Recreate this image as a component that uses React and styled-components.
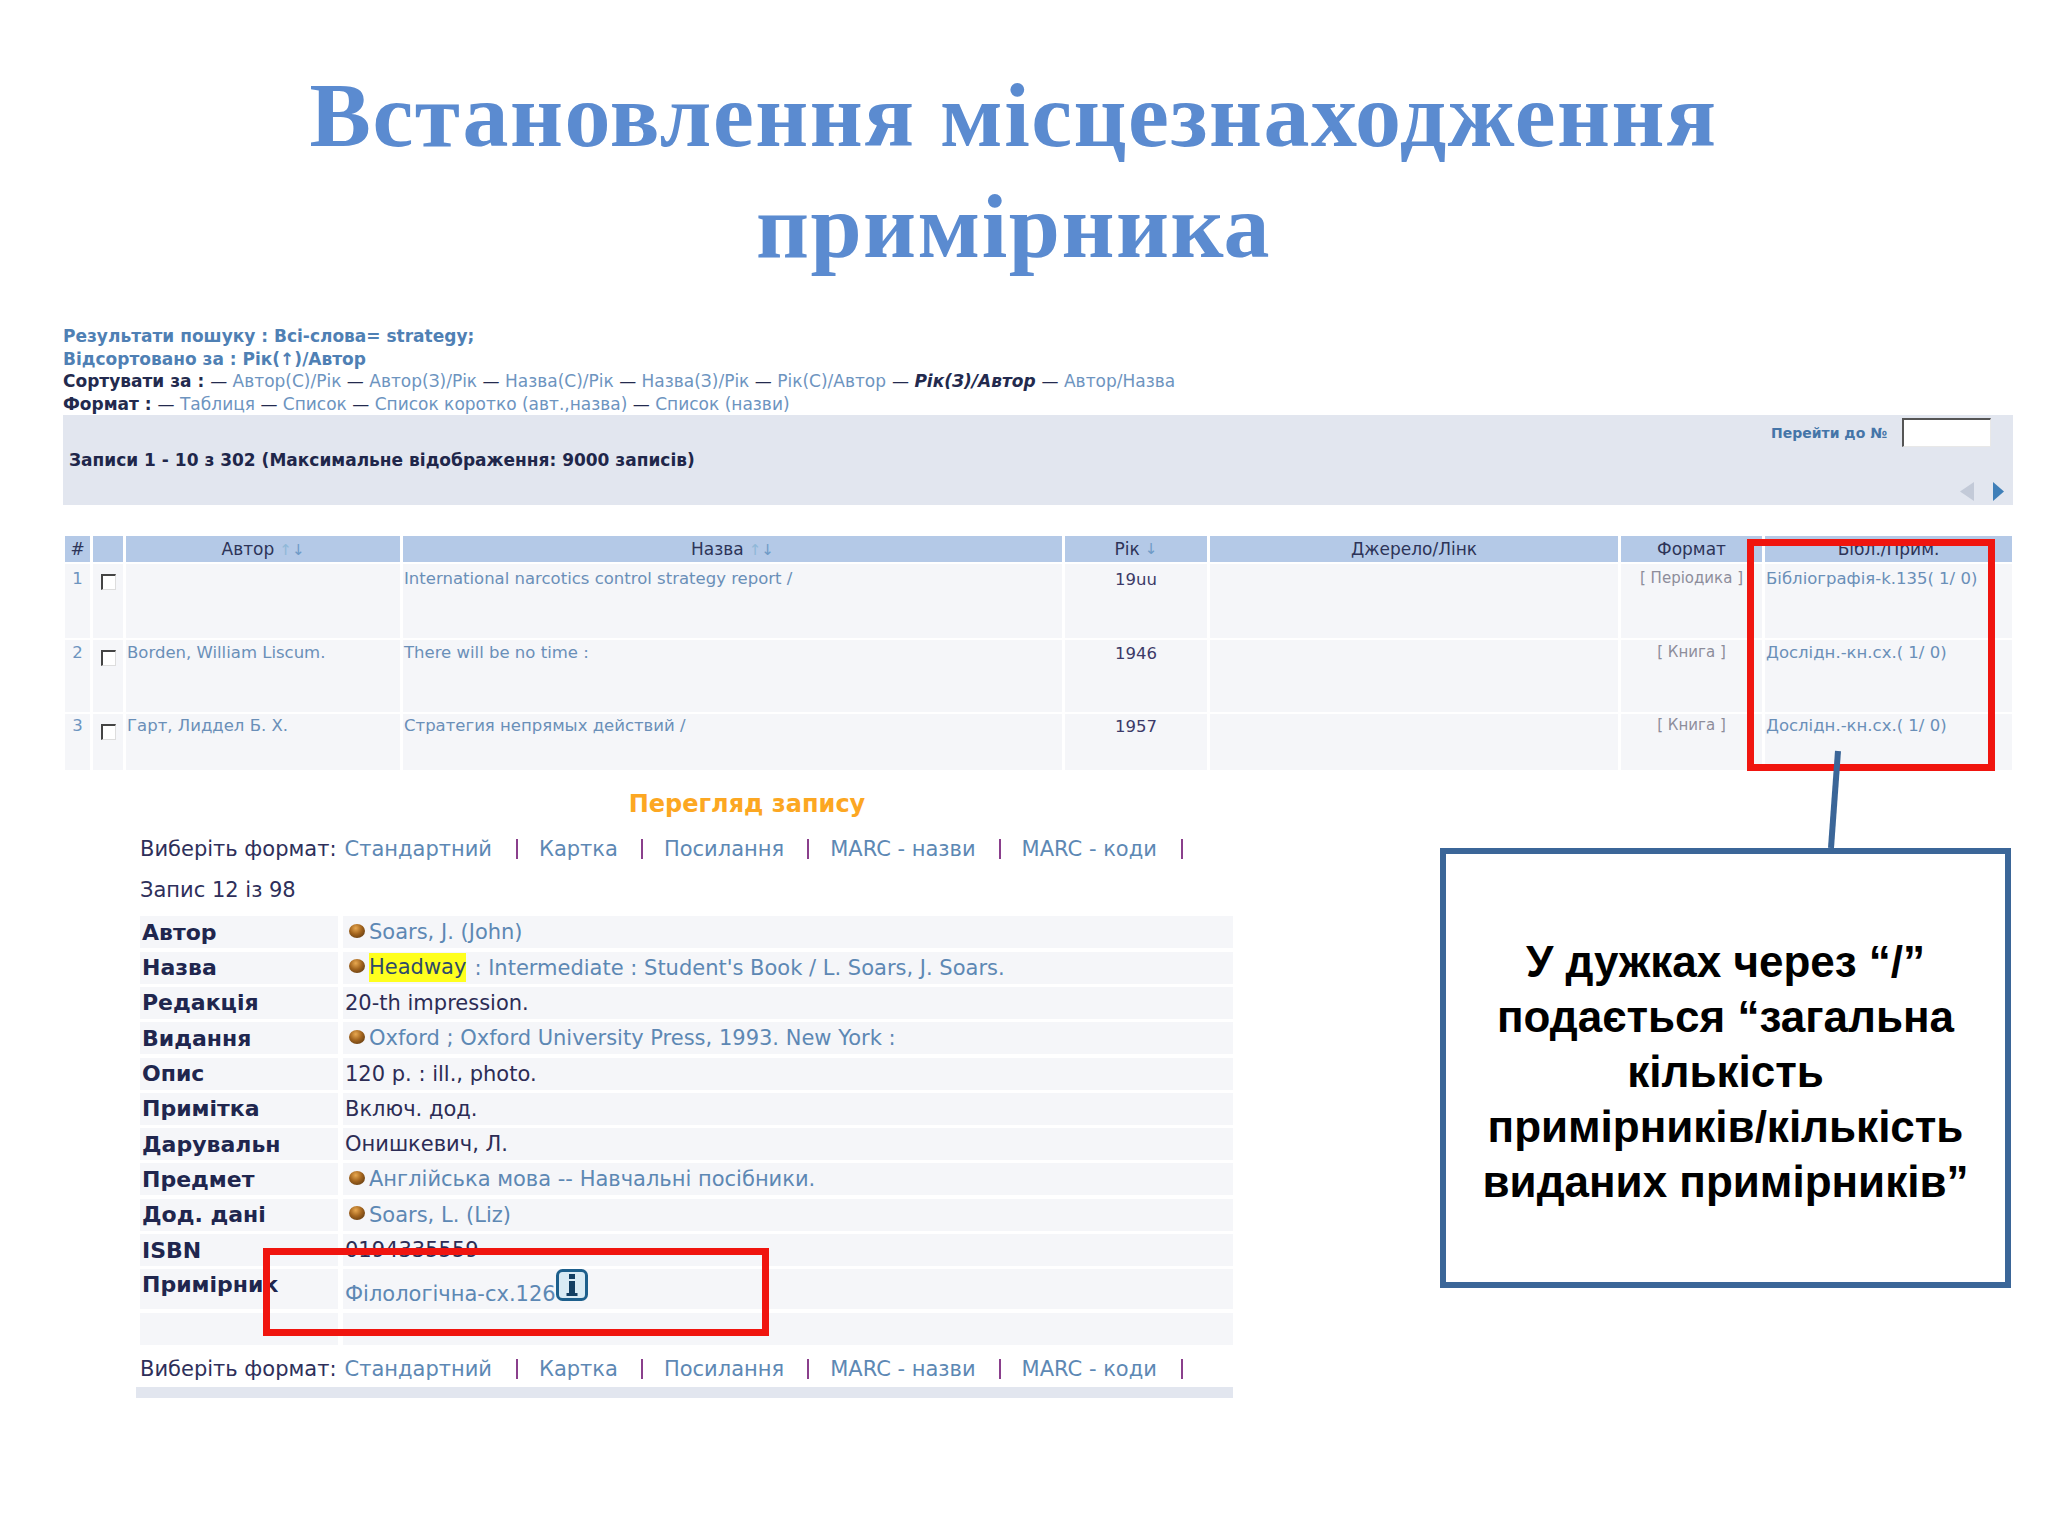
import React from "react";
import styled, { createGlobalStyle } from "styled-components";

const Global = createGlobalStyle`
  html, body { margin: 0; padding: 0; background: #fff; }
  * { box-sizing: border-box; }
`;

const Slide = styled.div`
  position: relative;
  width: 2048px;
  height: 1536px;
  overflow: hidden;
  background: #fff;
  padding: 60px 35px 0 63px;
  font-family: "DejaVu Sans", Verdana, sans-serif;
`;

const Title = styled.h1`
  margin: 0 0 0 -63px;
  width: 2048px;
  padding-right: 21px;
  text-align: center;
  font-family: "Liberation Serif", "Times New Roman", serif;
  font-weight: 700;
  font-size: 92px;
  line-height: 111px;
  letter-spacing: 1.5px;
  color: #5b8bd0;
`;

const Summary = styled.div`
  margin-top: 43px;
  font-size: 17px;
`;

const SummaryLine = styled.div`
  height: 22.6px;
  line-height: 22.6px;
  white-space: nowrap;
  font-weight: 700;
  color: ${(p) => (p.$accent ? "#4f80b4" : "#232a4e")};
`;

const SortLink = styled.span`
  font-weight: 400;
  color: #6d94bf;
`;

const ActiveSort = styled.span`
  font-style: italic;
  color: #232a4e;
`;

const Pager = styled.div`
  display: flex;
  justify-content: space-between;
  width: 1950px;
  height: 90px;
  background: #e2e6ef;
`;

const PagerCount = styled.div`
  align-self: center;
  margin-left: 6px;
  font-size: 17px;
  font-weight: 700;
  color: #20264a;
`;

const PagerTools = styled.div`
  display: flex;
  flex-direction: column;
  align-items: flex-end;
  justify-content: space-between;
  padding: 3px 9px 4px 0;
`;

const JumpRow = styled.div`
  display: flex;
  align-items: center;
  gap: 15px;
  margin-right: 13px;
  font-size: 14px;
  font-weight: 700;
  color: #4575a8;
`;

const JumpInput = styled.div`
  width: 89px;
  height: 29px;
  background: #fff;
  border: 1px solid #e8e8e8;
  border-top: 2px solid #555;
  border-left: 2px solid #555;
`;

const ArrowRow = styled.div`
  display: flex;
  gap: 19px;
`;

const Results = styled.div`
  display: flex;
  flex-direction: column;
  gap: 2px;
  width: 1947px;
  margin: 31px 0 0 2px;
`;

const ResultRow = styled.div`
  display: grid;
  grid-template-columns: 25px 30px 274px 659px 142px 408px 141px 247px;
  column-gap: 3px;
  height: ${(p) => p.$h}px;
`;

const HeadCell = styled.div`
  background: #b4c9e7;
  display: flex;
  align-items: center;
  justify-content: center;
  gap: 5px;
  font-size: 17px;
  color: #2d3458;
`;

const SortArrow = styled.span`
  font-size: 15px;
  color: ${(p) => (p.$dark ? "#6e9ac6" : "#8fb8d8")};
`;

const Cell = styled.div`
  background: #f5f6f9;
  padding-top: ${(p) => p.$top}px;
  font-size: 16.5px;
  line-height: 20px;
  white-space: nowrap;
`;

const NumCell = styled(Cell)`
  text-align: center;
  color: #6d94bf;
`;

const LinkCell = styled(Cell)`
  padding-left: 1px;
  padding-right: 0;
  color: #6a8fb8;
`;

const YearCell = styled(Cell)`
  padding-top: ${(p) => p.$top + 1}px;
  text-align: center;
  color: #3c3a68;
`;

const FormatCell = styled(Cell)`
  padding-top: ${(p) => p.$top - 1}px;
  text-align: center;
  font-size: 15px;
  color: #8d8d9b;
`;

const CheckCell = styled(Cell)`
  padding: 10px 0 0 8px;
`;

const Check = styled.div`
  width: 15px;
  height: 16px;
  background: #fff;
  border-top: 2px solid #444;
  border-left: 2px solid #444;
  border-right: 1px solid #ddd;
  border-bottom: 1px solid #ddd;
`;

const Lower = styled.div`
  display: flex;
  align-items: flex-start;
`;

const RecordColumn = styled.div`
  width: 1170px;
  padding-left: 77px;
  font-size: 21px;
`;

const RecordTitle = styled.div`
  margin: 19px 0 0 -77px;
  width: 1368px;
  text-align: center;
  font-size: 24px;
  line-height: 30px;
  font-weight: 700;
  color: #fca722;
`;

const FormatRow = styled.div`
  display: flex;
  align-items: center;
  height: 30px;
  margin-top: ${(p) => p.$mt}px;
  white-space: nowrap;
  color: #2e2f5a;
`;

const FormatLink = styled.span`
  color: #5d88b4;
  margin-left: ${(p) => p.$ml}px;
`;

const Sep = styled.span`
  display: inline-block;
  width: 2px;
  height: 20px;
  margin-left: ${(p) => p.$ml}px;
  background: #8a3f8c;
`;

const RecordCount = styled.div`
  height: 30px;
  line-height: 30px;
  margin-top: 11px;
  color: #2e2f5a;
`;

const Details = styled.div`
  display: flex;
  flex-direction: column;
  width: 1093px;
  margin-top: 11px;
`;

const DetailRow = styled.div`
  display: grid;
  grid-template-columns: 198px 890px;
  column-gap: 5px;
  height: ${(p) => p.$h}px;
  margin-bottom: ${(p) => p.$gap}px;
`;

const DetailLabel = styled.div`
  display: flex;
  align-items: ${(p) => (p.$top ? "flex-start" : "center")};
  padding: ${(p) => (p.$top ? "3px 0 0 2px" : "0 0 0 2px")};
  background: #f5f6f9;
  font-weight: 700;
  font-size: 22px;
  color: #20264e;
  white-space: nowrap;
`;

const DetailValue = styled.div`
  display: flex;
  align-items: ${(p) => (p.$end ? "flex-start" : "center")};
  padding: ${(p) => (p.$end ? "1px 0 0 2px" : "0 0 0 2px")};
  background: #f5f6f9;
  white-space: nowrap;
  color: ${(p) => (p.$link ? "#5d88b4" : "#2c2c55")};
`;

const Bullet = styled.span`
  flex: none;
  width: 16px;
  height: 14px;
  margin: -3px 4px 0 4px;
  border-radius: 50%;
  background: radial-gradient(circle at 42% 30%, #e8a850 0%, #a2641e 45%, #4a2c0c 100%);
`;

const Mark = styled.span`
  display: inline-block;
  height: 29px;
  line-height: 29px;
  margin-right: 8px;
  background: #ffff1e;
  color: #2e4a6a;
`;

const ShelfLink = styled.span`
  margin-top: 9px;
  line-height: 30px;
`;

const BottomBar = styled.div`
  width: 1097px;
  height: 11px;
  margin: 3px 0 0 -4px;
  background: #e2e6ef;
`;

const Callout = styled.div`
  display: flex;
  align-items: center;
  justify-content: center;
  flex: none;
  width: 571px;
  height: 440px;
  margin: 78px 0 0 207px;
  padding-bottom: 0;
  border: 6px solid #3b6698;
  background: #fff;
  text-align: center;
  font-family: "Liberation Sans", Arial, sans-serif;
  font-weight: 700;
  font-size: 44px;
  line-height: 54.8px;
  color: #000;
`;

const CalloutText = styled.div`
  margin-top: 8px;
`;

const RedFrame = styled.div`
  position: absolute;
  left: ${(p) => p.$x}px;
  top: ${(p) => p.$y}px;
  width: ${(p) => p.$w}px;
  height: ${(p) => p.$h}px;
  border: 7px solid #f0150f;
`;

const Connector = styled.svg`
  position: absolute;
  left: 1820px;
  top: 745px;
`;

const InfoIcon = () => (
  <svg width="32" height="32" viewBox="0 0 32 32" style={{ flex: "none", marginTop: -1 }}>
    <rect x="1.5" y="1.5" width="29" height="29" rx="5" fill="#d9ebf5" stroke="#1d5f8c" strokeWidth="3" />
    <rect x="13" y="5" width="6" height="5" fill="#123f63" />
    <rect x="13" y="12" width="6" height="14" fill="#123f63" />
    <rect x="10.5" y="24" width="11" height="3" fill="#123f63" />
  </svg>
);

const TriLeft = () => (
  <svg width="14" height="19" viewBox="0 0 14 19"><path d="M14 0 L0 9.5 L14 19 Z" fill="#c3cad8" /></svg>
);
const TriRight = () => (
  <svg width="11" height="19" viewBox="0 0 11 19"><path d="M0 0 L11 9.5 L0 19 Z" fill="#3f7fb8" /></svg>
);

const sorts = ["Автор(С)/Рік", "Автор(З)/Рік", "Назва(С)/Рік", "Назва(З)/Рік", "Рік(С)/Автор"];

const results = [
  { h: 74, top: 5, n: 1, author: "", title: "International narcotics control strategy report /", year: "19uu", fmt: "[ Періодика ]", lib: "Бібліографія-k.135( 1/ 0)" },
  { h: 72, top: 3, n: 2, author: "Borden, William Liscum.", title: "There will be no time :", year: "1946", fmt: "[ Книга ]", lib: "Дослідн.-кн.сх.( 1/ 0)" },
  { h: 56, top: 2, n: 3, author: "Гарт, Лиддел Б. Х.", title: "Стратегия непрямых действий /", year: "1957", fmt: "[ Книга ]", lib: "Дослідн.-кн.сх.( 1/ 0)" },
];

const FormatLinks = ({ mt }) => (
  <FormatRow $mt={mt}>
    Виберіть формат:
    <FormatLink $ml={8}>Стандартний</FormatLink>
    <Sep $ml={24} />
    <FormatLink $ml={21}>Картка</FormatLink>
    <Sep $ml={23} />
    <FormatLink $ml={21}>Посилання</FormatLink>
    <Sep $ml={23} />
    <FormatLink $ml={21}>MARC - назви</FormatLink>
    <Sep $ml={23} />
    <FormatLink $ml={21}>MARC - коди</FormatLink>
    <Sep $ml={24} />
  </FormatRow>
);

const details = [
  { label: "Автор", link: true, bullet: true, text: "Soars, J. (John)" },
  { label: "Назва", link: true, bullet: true, mark: "Headway", text: ": Intermediate : Student's Book / L. Soars, J. Soars." },
  { label: "Редакція", text: "20-th impression." },
  { label: "Видання", link: true, bullet: true, text: "Oxford ; Oxford University Press, 1993. New York :" },
  { label: "Опис", text: "120 p. : ill., photo." },
  { label: "Примітка", text: "Включ. дод." },
  { label: "Дарувальн", text: "Онишкевич, Л." },
  { label: "Предмет", link: true, bullet: true, text: "Англійська мова -- Навчальні посібники." },
  { label: "Дод. дані", link: true, bullet: true, text: "Soars, L. (Liz)" },
  { label: "ISBN", text: "0194335559" },
];

export default function App() {
  return (
    <Slide>
      <Global />
      <Title>
        Встановлення місцезнаходження
        <br />
        примірника
      </Title>

      <Summary>
        <SummaryLine $accent>Результати пошуку : Всі-слова= strategy;</SummaryLine>
        <SummaryLine $accent>Відсортовано за : Рік(↑)/Автор</SummaryLine>
        <SummaryLine>
          Сортувати за :{" "}
          <SortLink>
            {sorts.map((s) => (
              <React.Fragment key={s}>
                <ActiveSort> — </ActiveSort>
                {s}
              </React.Fragment>
            ))}
          </SortLink>{" "}
          <ActiveSort as="span" style={{ fontStyle: "normal", fontWeight: 400 }}>— </ActiveSort>
          <ActiveSort>Рік(З)/Автор</ActiveSort>{" "}
          <SortLink><ActiveSort style={{ fontStyle: "normal" }}>— </ActiveSort>Автор/Назва</SortLink>
        </SummaryLine>
        <SummaryLine>
          Формат :{" "}
          <SortLink>
            <ActiveSort style={{ fontStyle: "normal" }}>— </ActiveSort> Таблиця{" "}
            <ActiveSort style={{ fontStyle: "normal" }}> — </ActiveSort>Список{" "}
            <ActiveSort style={{ fontStyle: "normal" }}> — </ActiveSort> Список коротко (авт.,назва){" "}
            <ActiveSort style={{ fontStyle: "normal" }}> — </ActiveSort> Список (назви)
          </SortLink>
        </SummaryLine>
      </Summary>

      <Pager>
        <PagerCount>Записи 1 - 10 з 302 (Максимальне відображення: 9000 записів)</PagerCount>
        <PagerTools>
          <JumpRow>
            Перейти до №
            <JumpInput />
          </JumpRow>
          <ArrowRow>
            <TriLeft />
            <TriRight />
          </ArrowRow>
        </PagerTools>
      </Pager>

      <Results>
        <ResultRow $h={26}>
          <HeadCell>#</HeadCell>
          <HeadCell />
          <HeadCell>Автор <span><SortArrow>↑</SortArrow><SortArrow $dark>↓</SortArrow></span></HeadCell>
          <HeadCell>Назва <span><SortArrow>↑</SortArrow><SortArrow $dark>↓</SortArrow></span></HeadCell>
          <HeadCell>Рік <SortArrow $dark>↓</SortArrow></HeadCell>
          <HeadCell>Джерело/Лінк</HeadCell>
          <HeadCell>Формат</HeadCell>
          <HeadCell>Бібл./Прим.</HeadCell>
        </ResultRow>
        {results.map((r) => (
          <ResultRow key={r.n} $h={r.h}>
            <NumCell $top={r.top}>{r.n}</NumCell>
            <CheckCell><Check /></CheckCell>
            <LinkCell $top={r.top}>{r.author}</LinkCell>
            <LinkCell $top={r.top}>{r.title}</LinkCell>
            <YearCell $top={r.top}>{r.year}</YearCell>
            <Cell $top={r.top} />
            <FormatCell $top={r.top}>{r.fmt}</FormatCell>
            <LinkCell $top={r.top}>{r.lib}</LinkCell>
          </ResultRow>
        ))}
      </Results>

      <Lower>
        <RecordColumn>
          <RecordTitle>Перегляд запису</RecordTitle>
          <FormatLinks mt={15} />
          <RecordCount>Запис 12 із 98</RecordCount>
          <Details>
            {details.map((d) => (
              <DetailRow key={d.label} $h={32} $gap={3.3}>
                <DetailLabel>{d.label}</DetailLabel>
                <DetailValue $link={d.link}>
                  {d.bullet && <Bullet />}
                  {d.mark && <Mark>{d.mark}</Mark>}
                  {d.text}
                </DetailValue>
              </DetailRow>
            ))}
            <DetailRow $h={40} $gap={4}>
              <DetailLabel $top>Примірник</DetailLabel>
              <DetailValue $link $end>
                <ShelfLink>Філологічна-сх.126</ShelfLink>
                <InfoIcon />
              </DetailValue>
            </DetailRow>
            <DetailRow $h={32} $gap={0}>
              <DetailLabel />
              <DetailValue />
            </DetailRow>
          </Details>
          <FormatLinks mt={9} />
          <BottomBar />
        </RecordColumn>
        <Callout>
          <CalloutText>
            У дужках через “/”
            <br />
            подається “загальна
            <br />
            кількість
            <br />
            примірників/кількість
            <br />
            виданих примірників”
          </CalloutText>
        </Callout>
      </Lower>

      <RedFrame $x={1747} $y={539} $w={248} $h={232} />
      <RedFrame $x={263} $y={1248} $w={506} $h={88} />
      <Connector width="30" height="105" viewBox="0 0 30 105">
        <line x1="18" y1="6" x2="11" y2="103" stroke="#3b6698" strokeWidth="6" />
      </Connector>
    </Slide>
  );
}
